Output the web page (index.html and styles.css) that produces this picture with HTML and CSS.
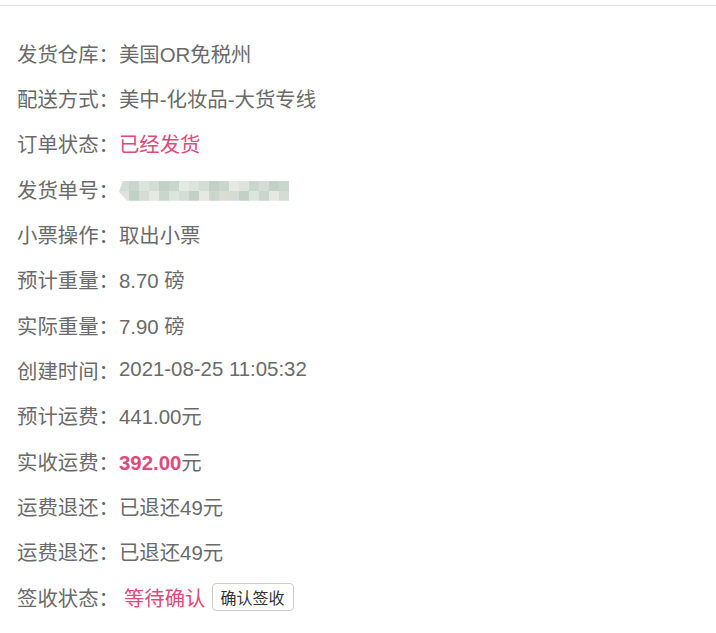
FILE: index.html
```html
<!DOCTYPE html>
<html lang="zh-CN">
<head>
<meta charset="utf-8">
<title>订单详情</title>
<link rel="stylesheet" href="styles.css">
</head>
<body>
<div class="panel">
  <ul class="info">
    <li class="row"><span class="label">发货仓库：</span><span class="val">美国OR免税州</span></li>
    <li class="row"><span class="label">配送方式：</span><span class="val">美中-化妆品-大货专线</span></li>
    <li class="row"><span class="label">订单状态：</span><span class="val pink">已经发货</span></li>
    <li class="row"><span class="label">发货单号：</span>
      <span class="mosaic">
        <i class="t1"></i><i class="t2"></i><i class="t3"></i><i class="t1"></i><i class="t4"></i><i class="t2"></i><i class="t5"></i><i class="t3"></i><i class="t1"></i><i class="t4"></i><i class="t2"></i><i class="t5"></i><i class="t3"></i><i class="t2"></i><i class="t1"></i><i class="t4"></i><i class="t2"></i>
        <i class="t3"></i><i class="t4"></i><i class="t1"></i><i class="t5"></i><i class="t2"></i><i class="t3"></i><i class="t1"></i><i class="t4"></i><i class="t5"></i><i class="t2"></i><i class="t6"></i><i class="t1"></i><i class="t4"></i><i class="t3"></i><i class="t2"></i><i class="t5"></i><i class="t1"></i>
      </span>
    </li>
    <li class="row"><span class="label">小票操作：</span><span class="val">取出小票</span></li>
    <li class="row"><span class="label">预计重量：</span><span class="val">8.70 磅</span></li>
    <li class="row"><span class="label">实际重量：</span><span class="val">7.90 磅</span></li>
    <li class="row"><span class="label">创建时间：</span><span class="val">2021-08-25 11:05:32</span></li>
    <li class="row"><span class="label">预计运费：</span><span class="val">441.00元</span></li>
    <li class="row"><span class="label">实收运费：</span><span class="val"><b class="pink strong">392.00</b>元</span></li>
    <li class="row"><span class="label">运费退还：</span><span class="val">已退还49元</span></li>
    <li class="row"><span class="label">运费退还：</span><span class="val">已退还49元</span></li>
    <li class="row"><span class="label">签收状态：</span><span class="val pink gap">等待确认</span><button class="btn" type="button">确认签收</button></li>
  </ul>
</div>
</body>
</html>
```
FILE: styles.css
```css
html, body {
  margin: 0;
  padding: 0;
  background: #fff;
}
body {
  font-family: "Liberation Sans", "Noto Sans CJK SC", sans-serif;
  color: #6a6a6a;
}
.panel {
  margin-top: 5px;
  border-top: 1px solid #ddd;
  padding: 24px 0 0 17px;
}
.info {
  list-style: none;
  margin: 0;
  padding: 0;
}
.row {
  display: flex;
  align-items: center;
  height: 45.33px;
  font-size: 20.4px;
  white-space: nowrap;
}
.label {
  color: #6a6a6a;
}
.val {
  color: #6a6a6a;
}
.pink {
  color: #dd4a7e;
}
.strong {
  font-weight: bold;
}
.gap {
  margin-left: 5px;
}
.btn {
  margin-left: 6px;
  height: 28px;
  padding: 0 8px;
  font-family: "Liberation Sans", "Noto Sans CJK SC", sans-serif;
  font-size: 16px;
  color: #333;
  background: #fff;
  border: 1px solid #ccc;
  border-radius: 4px;
}
.mosaic {
  display: grid;
  grid-template-columns: repeat(17, 10px);
  grid-auto-rows: 10px;
  margin-left: 0;
  margin-top: 4px;
  clip-path: polygon(4px 0, 100% 0, 100% 100%, 8px 100%, 0 55%);
}
.mosaic i {
  display: block;
}
.t1 { background: #d3ddd5; }
.t2 { background: #c9d6cd; }
.t3 { background: #dde4dc; }
.t4 { background: #c2d0c6; }
.t5 { background: #e4e9e2; }
.t6 { background: #d9ddd0; }
```
